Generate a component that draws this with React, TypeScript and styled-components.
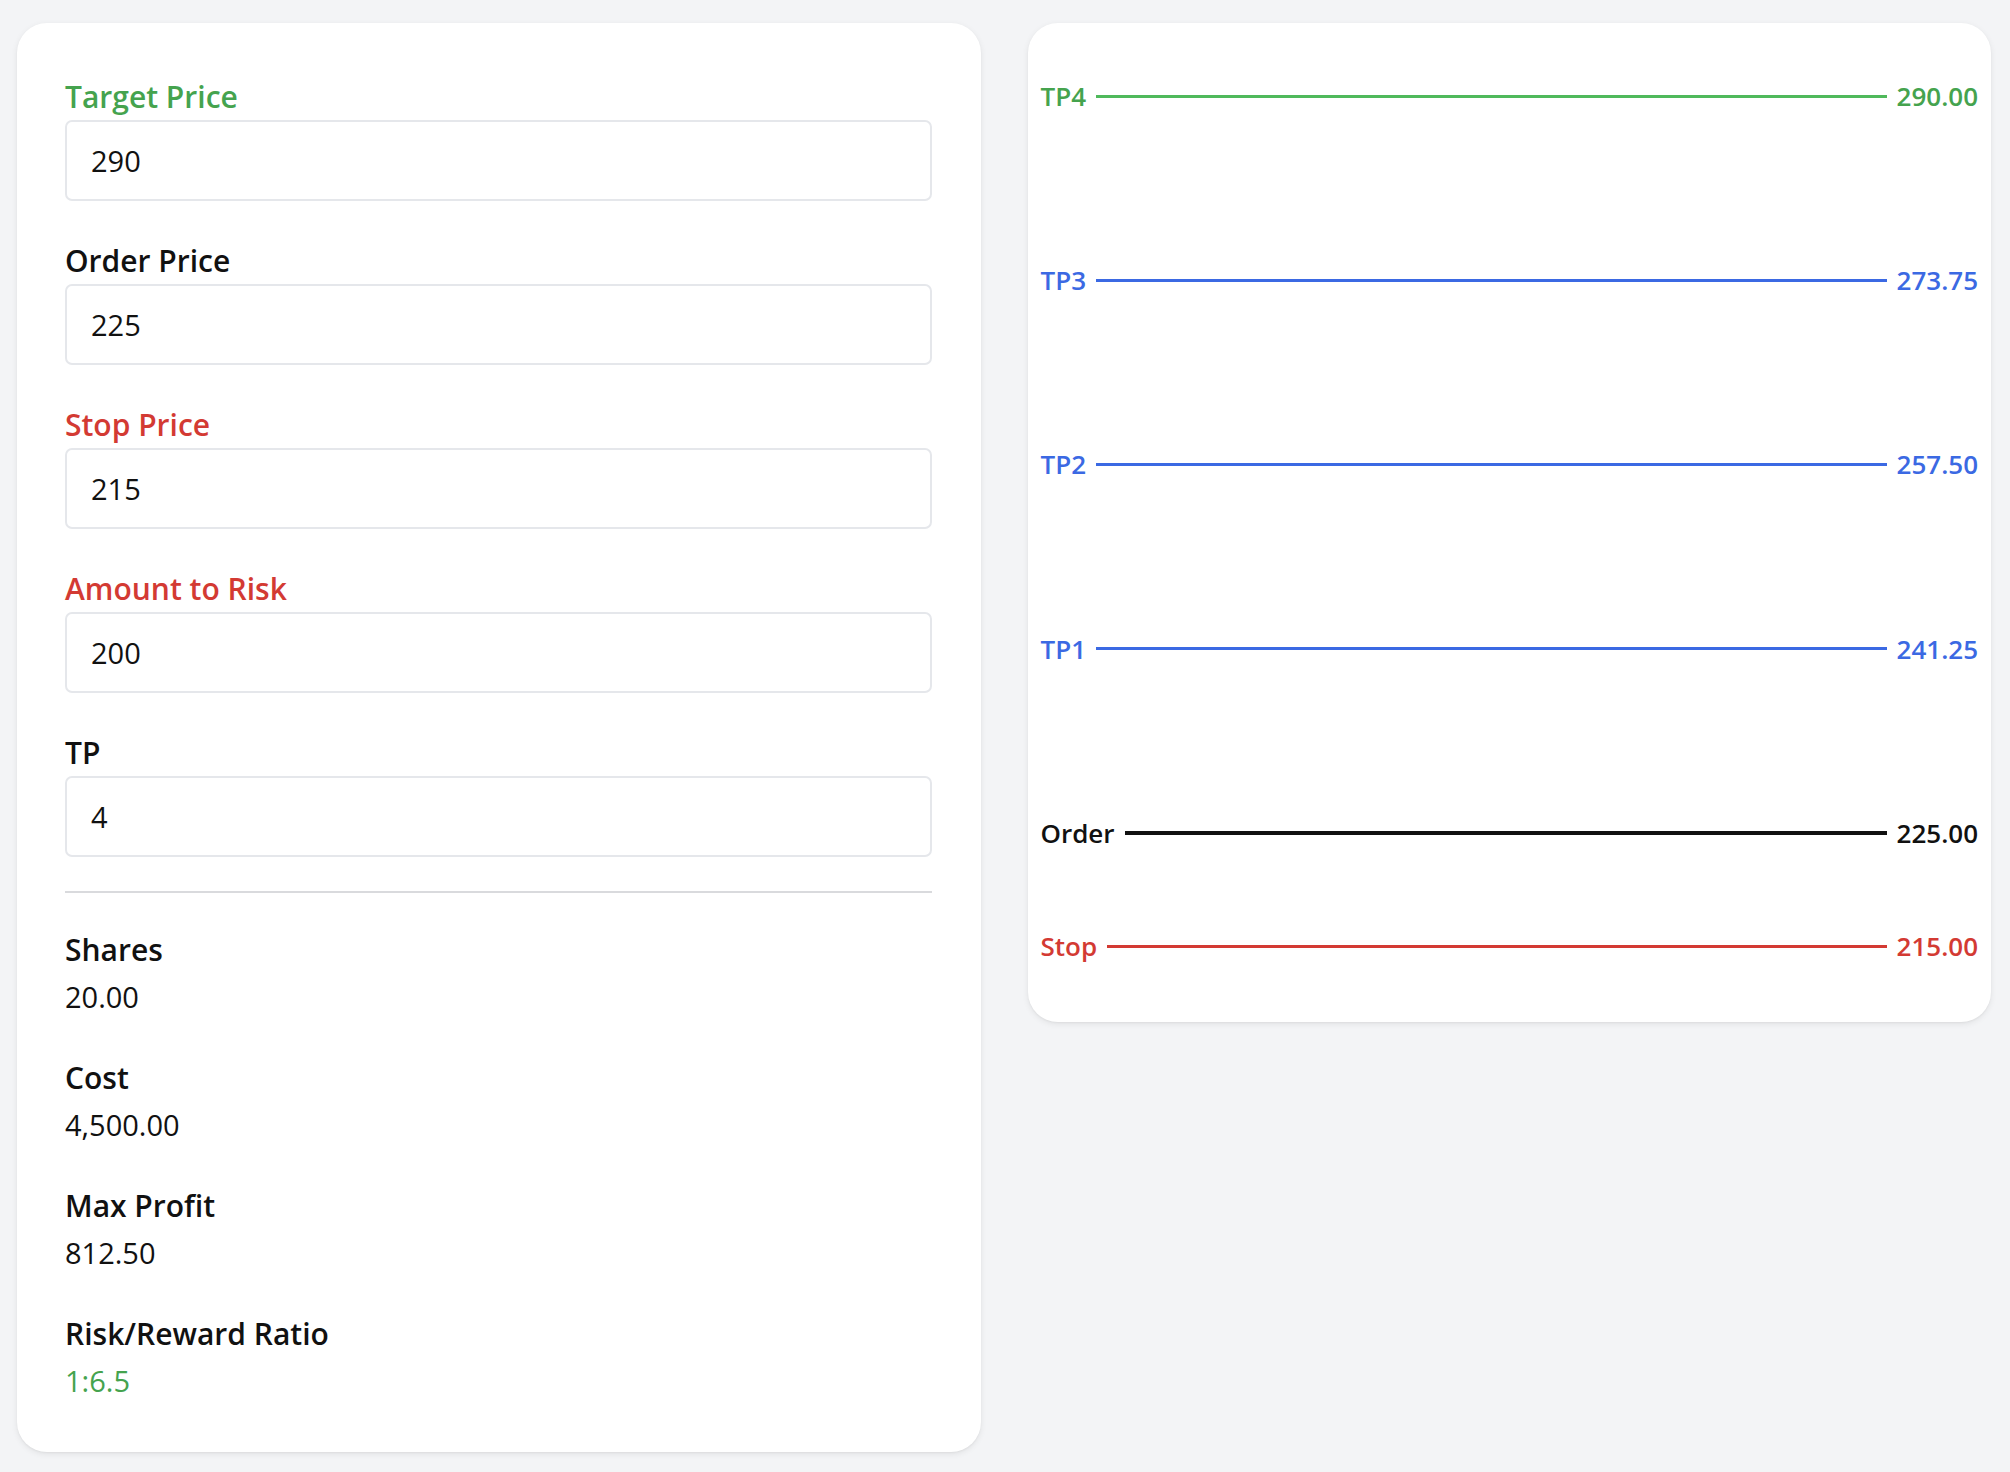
import styled, { createGlobalStyle } from "styled-components";

const GlobalStyle = createGlobalStyle`
  html, body {
    margin: 0;
    padding: 0;
    background-color: #f3f4f6;
    font-family: "Open Sans", "Liberation Sans", sans-serif;
  }
  * {
    box-sizing: border-box;
  }
`;

const Page = styled.div`
  display: grid;
  grid-template-columns: 1fr 1fr;
  gap: 47px;
  align-items: start;
  padding: 23px 19px 20px 17px;
  min-height: 1472px;
`;

const Card = styled.div`
  background-color: #ffffff;
  border-radius: 30px;
  box-shadow: 0 2px 6px rgba(0, 0, 0, 0.08), 0 1px 2px rgba(0, 0, 0, 0.04);
`;

const FormCard = styled(Card)`
  display: flex;
  flex-direction: column;
  padding: 52px 49px 49px 48px;
`;

const Field = styled.div`
  display: flex;
  flex-direction: column;
  & + & {
    margin-top: 38px;
  }
`;

const Label = styled.label<{ tone?: string }>`
  font-size: 30px;
  line-height: 44px;
  font-weight: 600;
  color: ${(props) => props.tone || "#111111"};
  margin-bottom: 1px;
`;

const Input = styled.input`
  height: 81px;
  width: 100%;
  padding: 0 24px;
  border: 2px solid #e5e7eb;
  border-radius: 7px;
  font-family: inherit;
  font-size: 29px;
  color: #111111;
  background-color: #ffffff;
  outline: none;
`;

const Divider = styled.hr`
  margin: 34px 0 35px;
  border: none;
  height: 2px;
  background-color: #d9dadd;
`;

const Result = styled.div`
  display: flex;
  flex-direction: column;
  & + & {
    margin-top: 37px;
  }
`;

const ResultValue = styled.div<{ tone?: string }>`
  margin-top: 2px;
  font-size: 29px;
  line-height: 44px;
  color: ${(props) => props.tone || "#111111"};
`;

const ChartCard = styled(Card)`
  padding: 73px 13px 76px 13px;
`;

const Canvas = styled.div`
  position: relative;
  height: 850px;
`;

// one horizontal level on the price scale; top comes from the price
const Level = styled.div<{ tone: string }>`
  position: absolute;
  left: 0;
  right: 0;
  display: flex;
  align-items: center;
  gap: 10px;
  transform: translateY(-50%);
  color: ${(props) => props.tone};
  font-size: 26px;
  font-weight: 600;
  line-height: 36px;
`;

const LevelLine = styled.div<{ tone: string; thick?: boolean }>`
  flex: 1;
  height: ${(props) => (props.thick ? 4 : 3)}px;
  background-color: ${(props) => props.tone};
`;

const GREEN = "#45a34e";
const RED = "#d33a33";
const BLUE = "#3b69e3";
const BLACK = "#111111";

const fields = [
  { label: "Target Price", value: "290", tone: GREEN },
  { label: "Order Price", value: "225" },
  { label: "Stop Price", value: "215", tone: RED },
  { label: "Amount to Risk", value: "200", tone: RED },
  { label: "TP", value: "4" },
];

const results = [
  { label: "Shares", value: "20.00" },
  { label: "Cost", value: "4,500.00" },
  { label: "Max Profit", value: "812.50" },
  { label: "Risk/Reward Ratio", value: "1:6.5", tone: GREEN },
];

const levels = [
  { name: "TP4", price: 290, tone: GREEN, line: "#4fb95b" },
  { name: "TP3", price: 273.75, tone: BLUE },
  { name: "TP2", price: 257.5, tone: BLUE },
  { name: "TP1", price: 241.25, tone: BLUE },
  { name: "Order", price: 225, tone: BLACK, thick: true },
  { name: "Stop", price: 215, tone: RED },
];

const maxPrice = 290;
const minPrice = 215;

function App() {
  return (
    <>
      <GlobalStyle />
      <Page>
        <FormCard>
          {fields.map((f) => (
            <Field key={f.label}>
              <Label tone={f.tone}>{f.label}</Label>
              <Input type="number" defaultValue={f.value} />
            </Field>
          ))}
          <Divider />
          {results.map((r) => (
            <Result key={r.label}>
              <Label as="div">{r.label}</Label>
              <ResultValue tone={r.tone}>{r.value}</ResultValue>
            </Result>
          ))}
        </FormCard>
        <ChartCard>
          <Canvas>
            {levels.map((l) => (
              <Level
                key={l.name}
                tone={l.tone}
                style={{
                  top: `${((maxPrice - l.price) / (maxPrice - minPrice)) * 100}%`,
                }}
              >
                <span>{l.name}</span>
                <LevelLine tone={l.line || l.tone} thick={l.thick} />
                <span>{l.price.toFixed(2)}</span>
              </Level>
            ))}
          </Canvas>
        </ChartCard>
      </Page>
    </>
  );
}

export default App;
